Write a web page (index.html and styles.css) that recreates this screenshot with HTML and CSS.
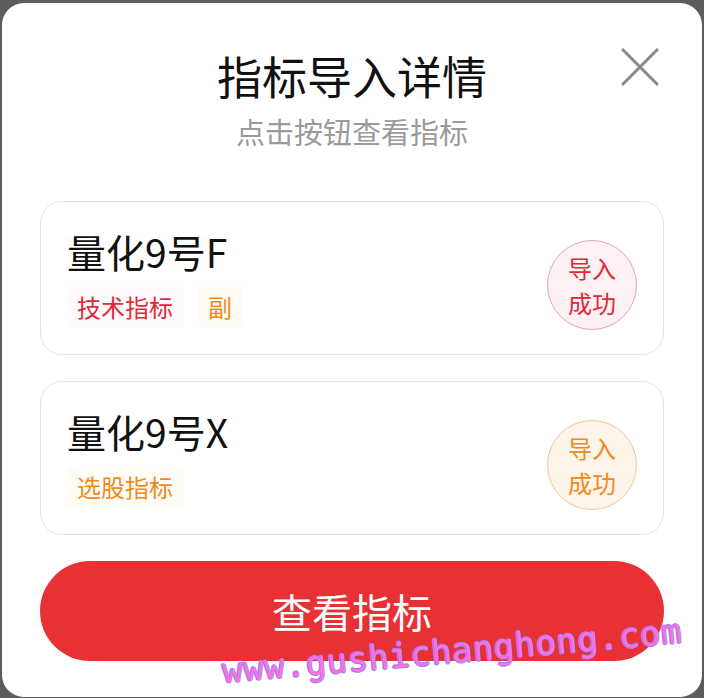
FILE: index.html
```html
<!DOCTYPE html>
<html lang="zh-CN">
<head>
    <meta charset="UTF-8">
    <meta name="viewport" content="width=device-width, initial-scale=1.0">
    <title>指标导入详情</title>
    <link rel="stylesheet" href="styles.css">
</head>
<body>
    <div class="modal">
        <button class="close-btn" aria-label="关闭">
            <svg width="38" height="38" viewBox="0 0 38 38">
                <path d="M1 1 L37 37 M37 1 L1 37" stroke="#8a8a8a" stroke-width="3" fill="none"/>
            </svg>
        </button>

        <header class="modal-header">
            <h1>指标导入详情</h1>
            <p class="subtitle">点击按钮查看指标</p>
        </header>

        <section class="list">
            <div class="card">
                <div class="card-info">
                    <h2>量化9号F</h2>
                    <div class="tags">
                        <span class="tag tag-red">技术指标</span>
                        <span class="tag tag-orange">副</span>
                    </div>
                </div>
                <div class="badge badge-red">导入<br>成功</div>
            </div>

            <div class="card">
                <div class="card-info">
                    <h2>量化9号X</h2>
                    <div class="tags">
                        <span class="tag tag-orange">选股指标</span>
                    </div>
                </div>
                <div class="badge badge-orange">导入<br>成功</div>
            </div>
        </section>

        <button class="view-btn">查看指标</button>

        <div class="watermark">www.gushichanghong.com</div>
    </div>
</body>
</html>
```

FILE: styles.css
```css
/* Reset */
* {
    margin: 0;
    padding: 0;
    box-sizing: border-box;
}

body {
    font-family: "Noto Sans CJK SC", "Noto Sans", sans-serif;
    background-color: #5c5c5c;
    color: #111;
    padding: 3px 2px 1px 2px;
}

/* Modal */
.modal {
    position: relative;
    height: 694px;
    background-color: #ffffff;
    border-radius: 22px;
    padding: 43px 38px 0 38px;
    overflow: hidden;
}

.close-btn {
    position: absolute;
    top: 45px;
    right: 43px;
    background: none;
    border: none;
    cursor: pointer;
    line-height: 0;
}

/* Header */
.modal-header {
    text-align: center;
}

.modal-header h1 {
    font-size: 45px;
    font-weight: 400;
    line-height: 60px;
    color: #111;
}

.subtitle {
    margin-top: 5px;
    font-size: 29px;
    line-height: 40px;
    color: #9a9a9a;
}

/* Cards */
.list {
    margin-top: 50px;
    display: flex;
    flex-direction: column;
    gap: 26px;
}

.card {
    display: flex;
    justify-content: space-between;
    align-items: center;
    height: 154px;
    padding: 23px 26px 26px 26px;
    border: 1px solid #e3e3e3;
    border-radius: 22px;
}

.card-info h2 {
    font-size: 39px;
    font-weight: 400;
    line-height: 50px;
    color: #111;
}

.tags {
    display: flex;
    gap: 15px;
    margin-top: 11px;
}

.tag {
    font-size: 24px;
    line-height: 40px;
    padding: 0 10px;
}

.tag-red {
    color: #e2283a;
    background-color: #fffafb;
}

.tag-orange {
    color: #ef8a1a;
    background-color: #fffcf6;
}

/* Status badge */
.badge {
    width: 90px;
    height: 90px;
    margin-top: 16px;
    border-radius: 50%;
    display: flex;
    align-items: center;
    justify-content: center;
    text-align: center;
    font-size: 24px;
    line-height: 35px;
}

.badge-red {
    color: #e0283c;
    background-color: #fdf1f3;
    border: 1px solid #e2a4b3;
}

.badge-orange {
    color: #ee8a1c;
    background-color: #fef5ea;
    border: 1px solid #efc893;
}

/* Main button */
.view-btn {
    display: block;
    width: 100%;
    height: 100px;
    margin-top: 26px;
    background-color: #e93034;
    color: #ffffff;
    border: none;
    border-radius: 50px;
    font-family: inherit;
    font-size: 40px;
    cursor: pointer;
}

/* Site watermark */
.watermark {
    position: absolute;
    left: 220px;
    top: 648px;
    font-family: "DejaVu Sans Mono", monospace;
    font-size: 34px;
    line-height: 40px;
    letter-spacing: 0.5px;
    color: #ff6ee0;
    text-shadow: 1px 0 #8f88f4, -1px 0 #8f88f4, 0 1px #8f88f4, 0 -1px #8f88f4;
    transform: rotate(-5deg);
    transform-origin: left center;
    pointer-events: none;
}
```
